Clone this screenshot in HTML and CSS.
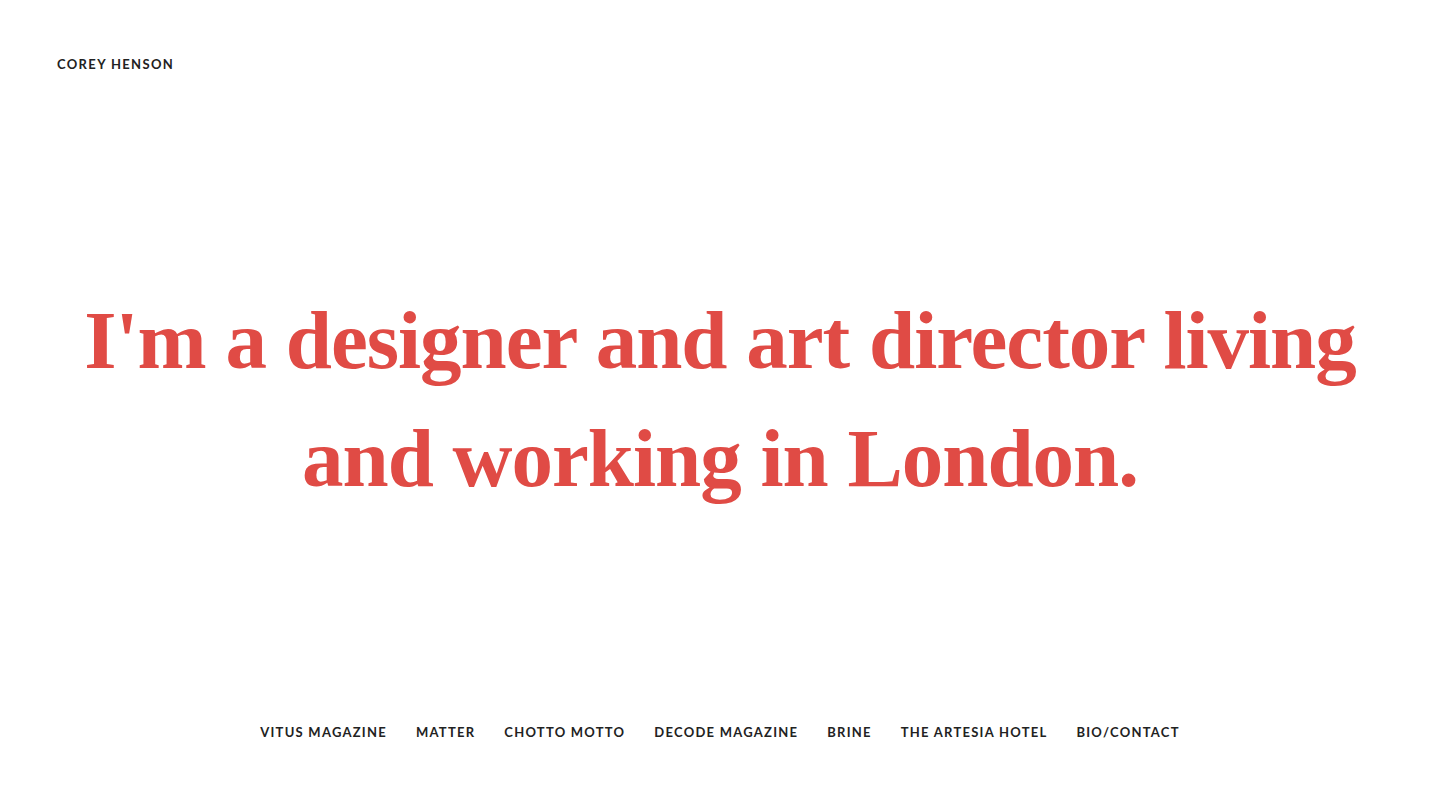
FILE: index.html
```html
<!DOCTYPE html>
<html>
<head>
<meta charset="utf-8">
<link rel="stylesheet" href="styles.css">
</head>
<body>
<div class="page">
  <header class="top">
    <a class="name" href="#">Corey Henson</a>
  </header>
  <main class="hero">
    <h1 class="headline">I'm a designer and art director living<br>and working in London.</h1>
  </main>
  <nav class="nav">
    <a href="#">Vitus Magazine</a>
    <a href="#">Matter</a>
    <a href="#">Chotto Motto</a>
    <a href="#">Decode Magazine</a>
    <a href="#">Brine</a>
    <a href="#">The Artesia Hotel</a>
    <a href="#">Bio/Contact</a>
  </nav>
</div>
</body>
</html>
```
FILE: styles.css
```css
html, body {
  margin: 0;
  padding: 0;
  background: #ffffff;
}
.page {
  height: 803px;
  display: flex;
  flex-direction: column;
  font-family: Lato, "Noto Sans", sans-serif;
}
.top {
  padding: 53px 57px 0;
  height: 20px;
}
.name, .nav a {
  font-weight: 700;
  font-size: 13px;
  letter-spacing: 1.35px;
  text-transform: uppercase;
  color: #222222;
  text-decoration: none;
  line-height: 16px;
}
.nav a {
  letter-spacing: 1.25px;
}
.hero {
  flex: 1;
  display: flex;
  align-items: center;
  justify-content: center;
}
.headline {
  margin: 0;
  font-family: "Liberation Serif", serif;
  font-weight: 700;
  font-size: 83px;
  line-height: 118px;
  color: #e04b45;
  text-align: center;
  letter-spacing: -1px;
}
.nav {
  display: flex;
  justify-content: center;
  gap: 29px;
  padding-bottom: 63px;
}
```
